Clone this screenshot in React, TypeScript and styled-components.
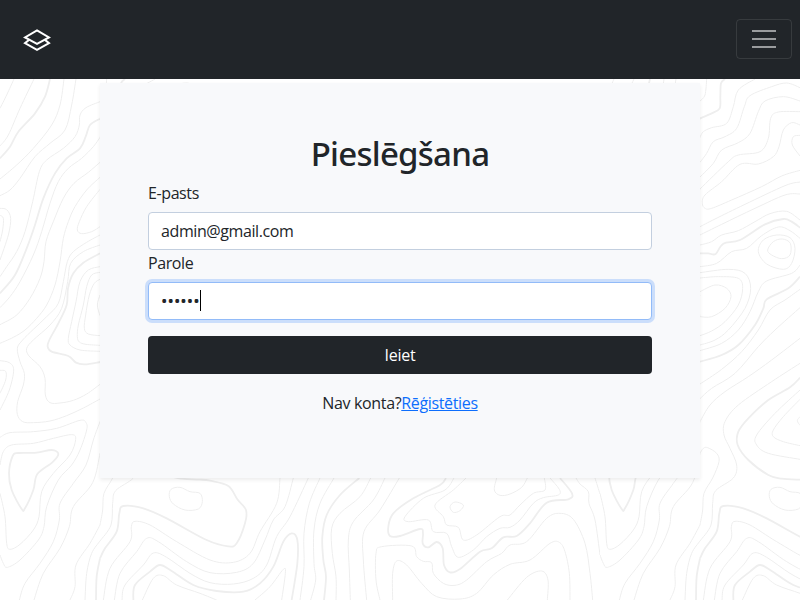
import React from "react";
import styled, { createGlobalStyle, css } from "styled-components";

const GlobalStyle = createGlobalStyle`
  *, *::before, *::after { box-sizing: border-box; }
  html, body { margin: 0; height: 100%; overflow: hidden; }
  body {
    background: #fff;
    color: #212529;
    font: 400 16px/1.5 "Segoe UI", "Open Sans", "Noto Sans", sans-serif;
  }
`;

const Page = styled.div`
  position: relative;
  height: 600px;
  overflow: hidden;
  isolation: isolate;
`;

const Backdrop = styled.svg`
  position: absolute;
  inset: 0;
  width: 100%;
  height: 100%;
  z-index: -1;
`;

const Navbar = styled.header`
  display: flex;
  align-items: center;
  justify-content: space-between;
  height: 79px;
  padding: 0 8px 1px 23px;
  background: #212529;
`;

const Brand = styled.a`
  display: flex;
  padding-top: 1px;
  color: #fff;
`;

const Toggler = styled.button`
  display: flex;
  align-items: center;
  justify-content: center;
  width: 56px;
  height: 40px;
  padding: 0;
  border: 1px solid rgba(255, 255, 255, 0.1);
  border-radius: 4px;
  background: transparent;
  color: rgba(255, 255, 255, 0.55);
`;

const Card = styled.main`
  display: flex;
  flex-direction: column;
  width: 600px;
  height: 395px;
  margin: 4px auto 0;
  padding: 48px;
  background: #f8f9fb;
  box-shadow: 0 2px 4px rgba(0, 0, 0, 0.075);
`;

const Title = styled.h1`
  margin: 0 0 8px;
  height: 41px;
  font-family: "Segoe UI", "Noto Sans", sans-serif;
  font-size: 33px;
  font-weight: 500;
  line-height: 45px;
  text-align: center;
  white-space: nowrap;
  letter-spacing: -0.75px;
`;

const Label = styled.label`
  height: 24px;
  margin-bottom: 8px;
  line-height: 26px;
  letter-spacing: -0.4px;
`;

const Field = styled.div<{ $focused?: boolean }>`
  display: flex;
  align-items: center;
  height: 38px;
  padding: 0 12px;
  border: 1px solid #c3cfdf;
  border-radius: 4px;
  background: #fff;
  letter-spacing: -0.4px;
  ${(p) =>
    p.$focused &&
    css`
      border-color: #92bbf8;
      box-shadow: 0 0 0 3px #cbdefb;
    `}
`;

const Dots = styled.span`
  width: 39px;
  font-family: "Noto Sans", sans-serif;
  font-size: 17px;
  line-height: 24px;
  letter-spacing: 0.05px;
  white-space: nowrap;
`;

const Caret = styled.span`
  width: 1px;
  height: 21px;
  margin-top: -1px;
  background: #000;
`;

const Submit = styled.button`
  height: 38px;
  margin: 16px 0;
  padding: 0;
  border: 0;
  border-radius: 4px;
  background: #212529;
  color: #fff;
  font: inherit;
  letter-spacing: -0.2px;
`;

const Footnote = styled.p`
  margin: 0;
  line-height: 26px;
  text-align: center;
  letter-spacing: -0.35px;
`;

const Link = styled.a`
  color: #0d6efd;
  text-decoration: underline;
`;

/* Contour lines, grouped in blocks of the 600px tile at three units per pixel.
   "*" marks a heavy index contour, "o" a closed one. */
type Block = { x: number; y: number; lines: string[] };

const blocks: Block[] = [
  {
    x: 0, y: 75, lines: [
      "42,12 20,60 0,100",
      "102,12 60,100 25,180 0,213",
      "* 150,12 135,65 105,115 55,170 30,215 0,250",
      "192,12 180,90 155,150 100,220 50,270 0,312",
      "228,12 215,90 195,165 150,205 105,245 60,310 30,345 0,362",
      "300,80 258,98 240,120 238,150 225,185 190,220 140,255 118,290 98,380 75,470 50,530 20,575 0,605",
      "* 300,131 270,150 257,185 240,220 200,250 165,295 130,370 105,450 80,520 45,600 0,655",
      "300,187 280,215 245,250 205,280 175,320 150,385 125,470 100,540 60,620 30,665 0,698",
      "300,262 265,292 222,325 190,370 160,440 138,500 132,560 120,610 90,670 50,720 0,749",
      "300,307 260,345 225,395 205,440 190,490 180,560 165,630 140,690 110,730 75,765 40,787 0,805",
      "300,343 260,395 238,440 232,465 245,476 275,470 300,455",
      "300,480 260,502 220,530 202,560 190,620 175,685 140,725 100,763 68,795 52,820 60,860 73,895 70,930 53,980 52,1018 68,1040 100,1043 150,1038 200,1022 250,999 300,972",
      "300,510 250,530 212,565 203,620 185,700 150,750 100,795 80,820 87,843 120,875 135,910 136,960 150,983 180,984 220,976 260,957 300,928",
      "* 300,535 250,563 220,595 204,640 200,690 175,745 148,795 143,815 155,830 205,843 228,863 255,868 300,861",
      "300,575 265,585 240,620 228,680 215,740 205,790 210,810 240,825 300,829",
      "300,592 275,600 260,635 250,690 235,750 232,785 238,801 258,808 300,811",
      "300,613 283,625 268,660 257,720 253,760 265,777 300,782",
      "300,660 292,690 300,722",
      "0,400 20,404 32,430 25,480 0,555",
      "0,421 10,430 8,465 0,500",
    ],
  },
  {
    x: 0, y: 330, lines: [
      "0,92 28,98 41,120 28,180 0,240",
      "0,121 17,124 17,150 0,190",
      "0,322 30,308 100,305 170,295 240,271 258,278 260,300 240,360 215,405 175,450 140,530 132,590 115,630 60,690 22,712 10,700 0,675",
      "0,405 10,365 35,345 100,340 160,325 215,314 227,328 210,375 160,430 125,485 117,560 100,600 60,643 30,658 20,640 15,560 0,490",
      "*o 38,378 55,369 110,368 155,360 175,372 157,397 112,432 100,480 75,535 65,537 35,480 27,430",
      "300,275 280,330 258,405 220,460 180,520 178,570 160,635 120,700 75,760 58,810",
      "300,370 278,458 220,530 208,590 180,655 130,730 102,810",
      "300,585 270,640 228,705 225,770 210,810",
      "300,633 275,670 260,730 255,810",
      "* 300,685 290,740 288,810",
    ],
  },
  {
    x: 95, y: 75, lines: [
      "35,12 30,60 15,78",
      "* 90,12 78,25 76,65 74,100 50,115 15,130",
      "180,12 130,45 115,95 95,145 50,158 25,170 15,187",
      "315,38 275,24 230,35 165,62 148,95 125,160 90,185 55,200 35,235 15,262",
      "315,78 265,65 210,78 190,110 165,175 130,203 80,225 55,265 15,306",
      "315,110 250,111 227,130 220,190 195,230 130,240 100,260 15,342",
      "315,150 290,143 265,165 252,215 235,245 190,267 135,268 80,320 30,360 22,385 30,400 50,400 110,375 200,335 260,303 315,286",
      "315,181 295,185 292,210 315,243",
      "315,321 270,332 150,388 60,432 15,455",
      "315,357 270,360 180,400 80,448 15,480",
      "315,435 275,409 225,416 180,440 130,467 80,480 50,500 15,510",
      "* 315,458 290,440 265,432 210,448 135,495 85,506 62,537 40,535 15,535",
      "315,490 285,467 250,456 200,482 155,520 110,530 65,565 15,575",
      "o 245,480 285,488 300,520 290,565 265,583 215,567 190,530 205,495",
      "o 235,500 262,492 286,505 285,540 260,551 230,540 218,525",
      "315,570 290,595 215,618 190,650 165,710 130,765 80,805 15,827",
      "15,593 100,583 150,595 167,640 150,700 100,765 60,795 15,810",
      "15,609 70,605 130,610 143,640 130,690 90,740 50,768 15,782",
      "15,650 60,630 95,640 108,665 90,700 50,725 15,725",
      "* 315,605 280,640 215,673 205,700 180,750 130,810 80,840 15,860",
      "315,643 270,675 225,705 190,765 140,830 80,883 15,927",
      "315,698 240,765 190,815 120,895 50,940 15,971",
    ],
  },
  {
    x: 95, y: 330, lines: [
      "315,25 230,90 160,140 90,185 45,225 15,275",
      "315,100 230,155 130,225 90,275 87,315 105,355 125,405 115,444 62,482 53,520 48,585 15,633",
      "* 315,143 285,172 220,210 160,265 130,305 128,345 160,390 220,435 260,446 315,449",
      "315,180 240,250 185,315 185,345 220,370 315,388",
      "315,208 265,260 235,300 235,320 265,335 315,347",
      "315,260 307,272 315,286",
      "15,370 25,355 38,353 65,370 72,395 53,444 27,490 23,540 15,585",
    ],
  },
  {
    x: 100, y: 470, lines: [
      "* 300,29 330,32 385,48 412,88 438,120 435,160 410,220 385,229 320,210 200,145 130,115 70,108 58,130 50,185 15,235 0,265",
      "o 240,52 270,65 300,70 307,95 295,117 255,120 220,102 208,80 213,58",
      "10,390 30,295 90,215 94,170 105,154 150,165 230,215 330,270 400,277 450,250 480,185 530,100 540,24",
      "43,390 60,310 110,245 140,205 175,215 260,275 330,308 410,307 460,280 495,210 520,150 555,110 580,24",
      "66,390 75,345 130,285 160,249 200,262 270,310 330,338 400,342 460,325 500,285 530,200 570,140 625,24",
      "* 100,390 105,345 150,305 180,285 215,303 280,345 350,363 430,365 480,340 520,290 550,215 575,190 592,210 592,280 575,390",
      "127,390 160,325 190,317 230,345 300,370 350,390",
      "465,390 510,350 550,298 556,310 545,390",
    ],
  },
  {
    x: 300, y: 470, lines: [
      "60,24 28,100 12,190 12,290 0,390",
      "102,24 60,100 42,180 42,280 47,330 32,390",
      "* 178,24 120,75 80,135 67,200 70,270 78,320 72,390",
      "212,24 180,80 120,130 95,175 97,250 108,320 108,390",
      "255,24 220,90 160,155 145,210 148,300 151,390",
      "298,24 240,120 192,185 190,270 200,390",
      "240,390 228,330 228,250 245,230 335,228 350,260 370,274 395,278 400,310 430,340 465,346 500,330 560,275 605,250 630,225 680,215 740,145 780,130 820,148 855,220 870,310 878,390",
      "* 438,24 420,45 340,85 280,130 265,170 270,198 300,198 360,177 369,190 368,220 385,232 410,216 428,235 432,285 450,307 480,297 540,245 575,235 610,202 650,198 690,160 740,98 805,88 816,70 780,24",
      "462,24 435,60 370,85 315,140 325,155 385,150 400,185 440,190 455,230 475,262 520,240 560,200 600,175 630,172 660,150 700,100 730,83 775,75 778,58 750,24",
      "498,24 460,60 405,105 430,140 440,165 475,172 490,210 530,195 600,140 630,135 660,105 700,70 735,60 733,24",
      "o 450,110 465,96 490,105 480,122 460,127",
      "590,24 583,60 600,76 630,72 665,52 682,24",
      "278,390 278,310 290,273 320,285 365,340 410,380 480,387 530,370 580,315 630,283 690,270 750,220 778,217 795,245 808,310 810,390",
      "622,390 680,322 725,303 744,330 742,390",
      "828,24 840,42 865,65 867,100 885,150 900,255",
      "885,24 900,72",
    ],
  },
];

function toPath(line: string) {
  const closed = /^\*?o/.test(line);
  const pts = line
    .replace(/^[*o]+ /, "")
    .split(" ")
    .map((p) => p.split(",").map(Number));
  const n = pts.length;
  const at = (i: number) =>
    closed ? pts[(i + n) % n] : pts[Math.max(0, Math.min(n - 1, i))];
  let d = `M${pts[0].join(" ")}`;
  for (let i = 0; i < (closed ? n : n - 1); i++) {
    const [a, b, c, e] = [at(i - 1), at(i), at(i + 1), at(i + 2)];
    const c1 = [b[0] + (c[0] - a[0]) / 6, b[1] + (c[1] - a[1]) / 6];
    const c2 = [c[0] - (e[0] - b[0]) / 6, c[1] - (e[1] - b[1]) / 6];
    d += `C${[...c1, ...c2, ...c].map((v) => v.toFixed(1)).join(" ")}`;
  }
  return d;
}

function Topography() {
  return (
    <Backdrop aria-hidden="true">
      <defs>
        <pattern id="contours" width="600" height="600" patternUnits="userSpaceOnUse">
          {blocks.map((b, i) => (
            <g key={i} transform={`translate(${b.x} ${b.y}) scale(${1 / 3})`} fill="none" stroke="#eeeeee">
              {b.lines.map((line) => (
                <path key={line} d={toPath(line)} strokeWidth={line[0] === "*" ? 5.4 : 3} />
              ))}
            </g>
          ))}
        </pattern>
      </defs>
      <rect width="100%" height="100%" fill="url(#contours)" />
    </Backdrop>
  );
}

export default function App() {
  return (
    <Page>
      <GlobalStyle />
      <Topography />
      <Navbar>
        <Brand href="#">
          <svg width="28" height="24" viewBox="0 0 28 24" fill="none" stroke="currentColor" strokeWidth="2">
            <path d="M14 2.4 26 9.4 14 15.9 2 9.4Z" />
            <path d="M6.2 11.8 2 15.2 14 21.8 26 15.2 21.8 11.8" />
          </svg>
        </Brand>
        <Toggler aria-label="Toggle navigation">
          <svg width="24" height="20" viewBox="0 0 24 20" stroke="currentColor" strokeWidth="2">
            <path d="M0 2H24M0 10H24M0 18H24" />
          </svg>
        </Toggler>
      </Navbar>
      <Card>
        <Title>Pieslēgšana</Title>
        <Label>E-pasts</Label>
        <Field>admin@gmail.com</Field>
        <Label>Parole</Label>
        <Field $focused>
          <Dots>••••••</Dots>
          <Caret />
        </Field>
        <Submit>Ieiet</Submit>
        <Footnote>
          Nav konta?<Link href="#">Rēģistēties</Link>
        </Footnote>
      </Card>
    </Page>
  );
}
